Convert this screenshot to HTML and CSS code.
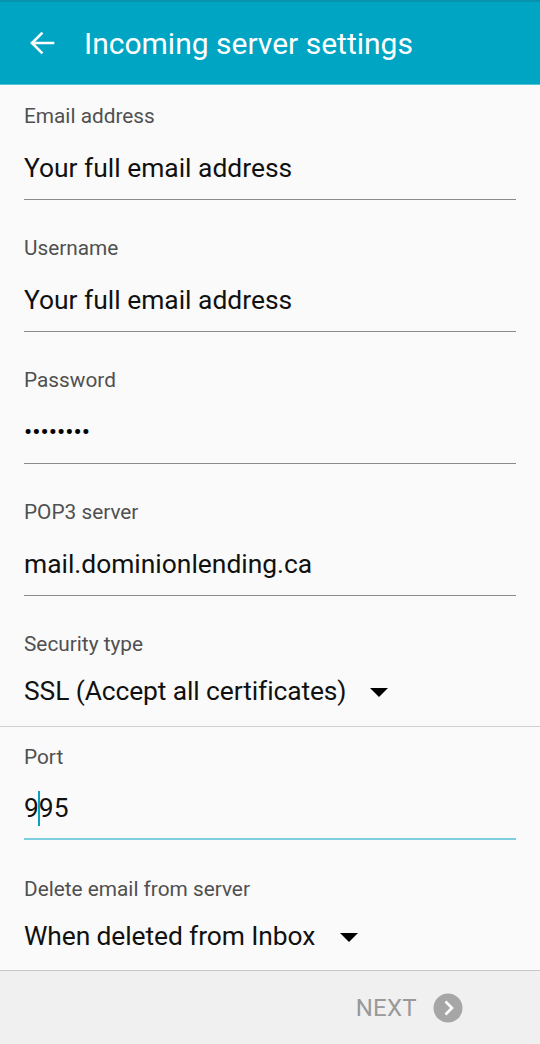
FILE: index.html
```html
<!DOCTYPE html>
<html lang="en">
<head>
<meta charset="utf-8">
<title>Incoming server settings</title>
<link rel="stylesheet" href="styles.css">
</head>
<body>
<div class="screen">
  <header class="appbar">
    <svg class="back" width="26" height="24" viewBox="0 0 26 24" aria-hidden="true">
      <path d="M24 12H3M12.5 2.5L3 12l9.5 9.5" fill="none" stroke="#fff" stroke-width="2.6" stroke-linecap="square"/>
    </svg>
    <h1 class="title">Incoming server settings</h1>
  </header>
  <main class="form">
    <div class="field first">
      <div class="label">Email address</div>
      <div class="value">Your full email address</div>
    </div>
    <div class="field">
      <div class="label">Username</div>
      <div class="value">Your full email address</div>
    </div>
    <div class="field">
      <div class="label">Password</div>
      <div class="value dots">••••••••</div>
    </div>
    <div class="field">
      <div class="label">POP3 server</div>
      <div class="value">mail.dominionlending.ca</div>
    </div>
    <div class="select">
      <div class="label">Security type</div>
      <div class="value">SSL (Accept all certificates)<span class="tri"></span></div>
    </div>
    <div class="field port">
      <div class="label">Port</div>
      <div class="value">9<span class="caret"></span>95</div>
    </div>
    <div class="select last">
      <div class="label">Delete email from server</div>
      <div class="value">When deleted from Inbox<span class="tri"></span></div>
    </div>
  </main>
  <footer class="footer">
    <span class="next">NEXT</span>
    <svg class="next-icon" width="30" height="30" viewBox="0 0 30 30" aria-hidden="true">
      <circle cx="15" cy="15" r="14.5" fill="#a6a6a6"/>
      <path d="M12.5 8.5L19 15l-6.5 6.5" fill="none" stroke="#fff" stroke-width="2.6"/>
    </svg>
  </footer>
</div>
</body>
</html>
```
FILE: styles.css
```css
html, body {
  margin: 0;
  padding: 0;
}
body {
  background: #fafafa;
  font-family: Roboto, "Noto Sans", sans-serif;
}
.screen {
  width: 540px;
  height: 1044px;
  display: flex;
  flex-direction: column;
  background: #fafafa;
  overflow: hidden;
}
.appbar {
  height: 82px;
  flex: none;
  background: #00a5c3;
  border-top: 2px solid #0792ad;
  display: flex;
  align-items: center;
  padding-left: 29px;
  box-sizing: content-box;
  border-bottom: 1px solid #56c3d8;
}
.back {
  display: block;
  margin-top: -1px;
}
.title {
  margin: 0 0 0 29px;
  font-weight: 400;
  font-size: 30px;
  color: #fff;
}
.form {
  flex: 1;
  min-height: 0;
  display: flex;
  flex-direction: column;
}
.field {
  margin: 0 24px;
  padding: 36px 0 15px;
  border-bottom: 1px solid #8a8a8a;
}
.field.first {
  padding-top: 19px;
}
.label {
  font-size: 20.8px;
  line-height: 24px;
  color: #505050;
}
.value {
  font-size: 26.4px;
  line-height: 32px;
  height: 32px;
  color: #111;
  margin-top: 24px;
  display: flex;
  align-items: center;
}
.dots {
  font-size: 24.5px;
  letter-spacing: 0;
  color: #000;
}
.select {
  padding: 36px 24px 19px;
  border-bottom: 1px solid #cfcfcf;
}
.select .value {
  margin-top: 19px;
  letter-spacing: -0.1px;
}
.select.last {
  padding-top: 37px;
  padding-bottom: 18px;
  border-bottom: 2px solid #c8c8c8;
}
.tri {
  width: 0;
  height: 0;
  border-left: 9px solid transparent;
  border-right: 9px solid transparent;
  border-top: 9px solid #000;
  margin-left: 24px;
  margin-top: 2px;
}
.last .tri {
  margin-left: 25px;
}
.port {
  padding-top: 18px;
  padding-bottom: 14px;
  border-bottom: 2px solid #7dcfdf;
}
.port .value {
  margin-top: 23px;
}
.caret {
  display: inline-block;
  width: 2px;
  height: 35px;
  background: #0aa1bf;
  margin: 0 -1px;
  position: relative;
  z-index: 1;
}
.footer {
  height: 73px;
  flex: none;
  background: #f0f0f0;
  display: flex;
  align-items: center;
  justify-content: flex-end;
  padding-right: 77px;
  gap: 16px;
}
.next {
  font-size: 24px;
  color: #999;
  letter-spacing: 0.3px;
  margin-top: 1px;
}
.next-icon {
  display: block;
  margin-top: 1px;
}
```
